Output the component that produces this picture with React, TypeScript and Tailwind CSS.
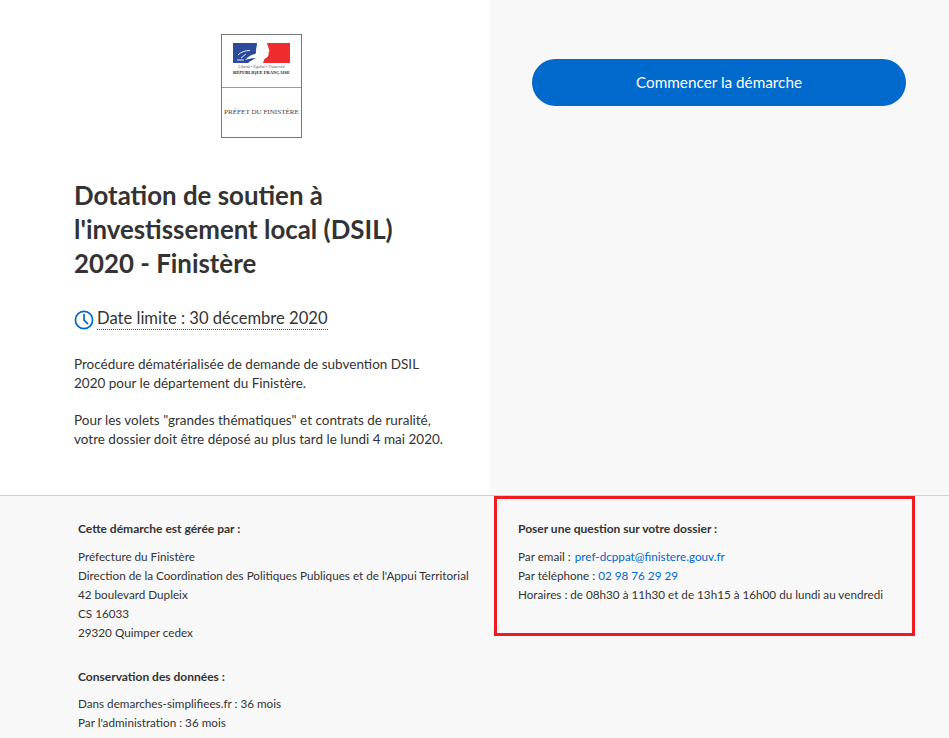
const FONT = "font-['Lato','Noto_Sans',sans-serif]";

function Logo() {
  return (
    <div className="w-[81px] h-[104px] border border-[#777] bg-white flex flex-col">
      <div className="h-[53px] border-b border-[#999] flex flex-col items-center pt-[8px]">
        <svg width="57" height="20" viewBox="0 0 57 20">
          <rect width="28" height="20" fill="#2b4a9b" />
          <rect x="28" width="29" height="20" fill="#ee2b2e" />
          <path d="M24 0H34L35 3.500L36.500 8L35.500 9.500L35.800 11.500L34.500 14C33 15 31.500 15.500 31 17L30 20H15C17 18 20 16.500 23 15.500C20 15 16 15.800 12 17C15 13.500 19 11.500 23 10.500C22.500 7 24 3.500 24 0Z" fill="#fff" />
          <path d="M5 12C8 9 12 7.500 17 7.500M8 15L13 11M4 17H11" stroke="#fff" strokeWidth="0.9" fill="none" />
        </svg>
        <div className="text-[4px] leading-[6px] mt-[1px] italic text-[#555] font-['Liberation_Serif',serif] whitespace-nowrap">Liberté • Égalité • Fraternité</div>
        <div className="text-[4.5px] leading-[6px] text-[#222] font-bold font-['Liberation_Serif',serif] whitespace-nowrap">RÉPUBLIQUE FRANÇAISE</div>
      </div>
      <div className="flex-1 flex items-center justify-center text-[7.1px] text-[#444] font-['Liberation_Serif',serif] whitespace-nowrap">PRÉFET DU FINISTÈRE</div>
    </div>
  );
}

function ClockIcon() {
  return (
    <svg width="20" height="20" viewBox="0 0 20 20" fill="none" stroke="#0069cc" strokeWidth="1.7" strokeLinecap="round" className="shrink-0 mt-[2px]">
      <circle cx="10" cy="10" r="8.6" />
      <path d="M10 4.500V10.200L13.600 13.600" />
    </svg>
  );
}

export default function App() {
  return (
    <div className={`${FONT} relative h-[738px] w-[949px] overflow-hidden bg-[#f8f8f8] text-[#333]`}>
      <div className="flex h-[496px] border-b border-[#d0d0d0]">
        <div className="w-[490px] bg-white pl-[74px] pr-[40px] pt-[34px]">
          <div className="ml-[147px]">
            <Logo />
          </div>
          <h1 className="mt-[40px] text-[25.85px] leading-[34px] font-bold">
            Dotation de soutien à
            <br />
            l'investissement local (DSIL)
            <br />
            2020 - Finistère
          </h1>
          <div className="mt-[27px] flex items-center gap-[3px]">
            <ClockIcon />
            <span className="text-[16.6px] leading-[22px] border-b border-dotted border-[#0069cc]">Date limite : 30 décembre 2020</span>
          </div>
          <p className="mt-[25px] text-[13.5px] leading-[19px]">
            Procédure dématérialisée de demande de subvention DSIL
            <br />
            2020 pour le département du Finistère.
          </p>
          <p className="mt-[18px] text-[13.5px] leading-[19px]">
            Pour les volets "grandes thématiques" et contrats de ruralité,
            <br />
            votre dossier doit être déposé au plus tard le lundi 4 mai 2020.
          </p>
        </div>
        <div className="flex-1 pl-[42px] pt-[59px]">
          <button className="w-[374px] h-[47px] rounded-full bg-[#0069cc] text-white text-[15.3px]">Commencer la démarche</button>
        </div>
      </div>
      <div className="flex text-[11.7px] leading-[19px]">
        <div className="w-[440px] ml-[78px] pt-[23px]">
          <h2 className="text-[12px] font-bold mb-[9px]">Cette démarche est gérée par :</h2>
          <p>Préfecture du Finistère</p>
          <p>Direction de la Coordination des Politiques Publiques et de l'Appui Territorial</p>
          <p>42 boulevard Dupleix</p>
          <p>CS 16033</p>
          <p>29320 Quimper cedex</p>
          <h2 className="text-[12px] font-bold mt-[25px] mb-[8px]">Conservation des données :</h2>
          <p>Dans demarches-simplifiees.fr : 36 mois</p>
          <p>Par l'administration : 36 mois</p>
        </div>
        <div className="pt-[23px]">
          <h2 className="text-[12px] font-bold mb-[9px]">Poser une question sur votre dossier :</h2>
          <p>Par email : <a className="ml-[1px] text-[#0069cc]">pref-dcppat@finistere.gouv.fr</a></p>
          <p>Par téléphone : <a className="text-[#0069cc]">02 98 76 29 29</a></p>
          <p>Horaires : de 08h30 à 11h30 et de 13h15 à 16h00 du lundi au vendredi</p>
        </div>
      </div>
      <div className="absolute left-[494px] top-[496px] w-[421px] h-[140px] border-[3px] border-[#ed1c24]" />
    </div>
  );
}
